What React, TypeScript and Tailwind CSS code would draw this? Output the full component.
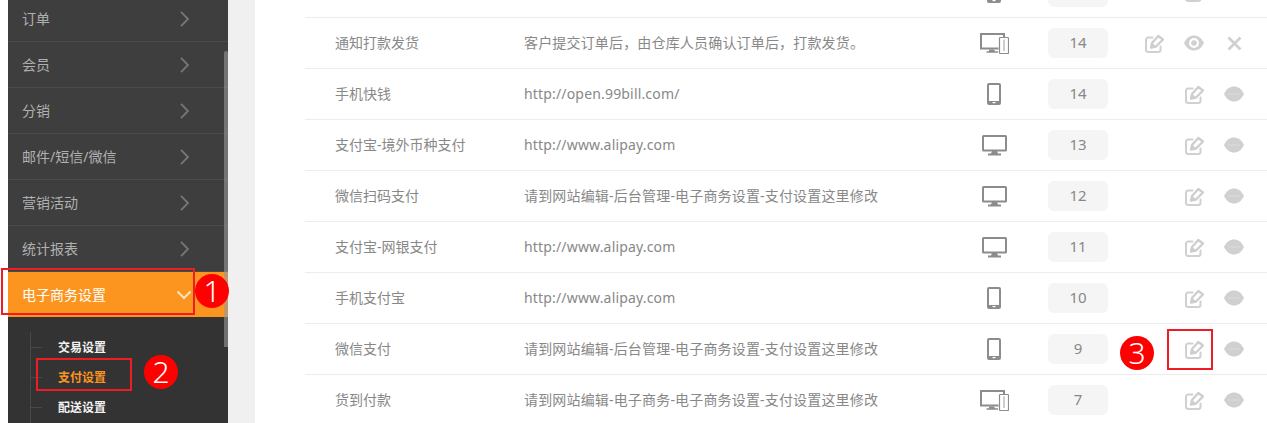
const zh = "font-['Noto_Sans','Noto_Sans_CJK_SC',sans-serif]";

function Chevron() {
  return (
    <svg width="9" height="16" viewBox="0 0 9 16" className="shrink-0">
      <path d="M1 .8L8 8l-7 7.200" fill="none" stroke="#777777" strokeWidth="1.800" />
    </svg>
  );
}

function Monitor() {
  return (
    <svg width="25" height="21" viewBox="0 0 25 21">
      <rect x="1" y="1" width="23" height="14.500" rx="0.500" fill="none" stroke="#8c8c8c" strokeWidth="2" />
      <path d="M10 16h5l1 2.500h3V20.500H6v-2h3z" fill="#8c8c8c" />
    </svg>
  );
}

function Phone() {
  return (
    <svg width="14" height="22" viewBox="0 0 14 22">
      <rect x="1" y="1" width="12" height="20" rx="1" fill="none" stroke="#8c8c8c" strokeWidth="2" />
      <rect x="1" y="18" width="12" height="3" fill="#8c8c8c" />
      <rect x="5.500" y="19" width="3" height="1.200" fill="#fff" />
    </svg>
  );
}

function Devices() {
  return (
    <svg width="29" height="21" viewBox="0 0 29 21">
      <path d="M18.500 15.500H1V1h23v9.500" fill="none" stroke="#8c8c8c" strokeWidth="2" />
      <path d="M9 16.500h5l1 1.800h3v1.500H6.500v-1.500H9z" fill="#8c8c8c" />
      <rect x="19.500" y="4.500" width="9" height="16" rx="0.800" fill="#fff" stroke="#8c8c8c" strokeWidth="1.200" />
      <rect x="23.300" y="6.500" width="1.400" height="11.500" fill="#b8b8b8" />
    </svg>
  );
}

function Edit() {
  return (
    <svg width="19" height="19" viewBox="0 0 19 19">
      <path d="M7.500 3.500H3.200A2.200 2.200 0 0 0 1 5.700v10.100A2.200 2.200 0 0 0 3.200 18h10.100a2.200 2.200 0 0 0 2.200-2.200v-3.300" fill="none" stroke="#d0d0d0" strokeWidth="2" strokeLinecap="round" />
      <path d="M6 13.500l1-4.500 6.300-7 4.700 3.500-7 7z" fill="none" stroke="#cecece" strokeWidth="2.300" strokeLinejoin="round" />
      <path d="M5.500 14l1-6 5 5z" fill="#cecece" />
    </svg>
  );
}

function Eye() {
  return (
    <svg width="20" height="16" viewBox="0 0 20 16">
      <path fillRule="evenodd" d="M0 8C2.500 2.800 6 .5 10 .5s7.500 2.300 10 7.500c-2.500 5.200-6 7.500-10 7.500S2.500 13.200 0 8zm10-5a5 5 0 1 0 0 10 5 5 0 0 0 0-10z" fill="#d0d0d0" />
      <circle cx="10" cy="8" r="2.800" fill="#d0d0d0" />
    </svg>
  );
}

function Closed() {
  return (
    <svg width="20" height="16" viewBox="0 0 20 16">
      <path d="M0 8C2.500 2.800 6 .5 10 .5s7.500 2.300 10 7.500c-2.500 5.200-6 7.500-10 7.500S2.500 13.200 0 8z" fill="#d0d0d0" />
      <path d="M4 8h12" stroke="#dcdcdc" strokeWidth="1" />
    </svg>
  );
}

function Cross() {
  return (
    <svg width="15" height="15" viewBox="0 0 15 15">
      <path d="M1.500 1.500l12 12M13.500 1.500l-12 12" stroke="#d0d0d0" strokeWidth="2.800" />
    </svg>
  );
}

const rows = [
  { name: "", desc: "", device: "phone", num: "" },
  { name: "通知打款发货", desc: "客户提交订单后\uFF0C由仓库人员确认订单后\uFF0C打款发货。", device: "devices", num: "14", active: true },
  { name: "手机快钱", desc: "http://open.99bill.com/", device: "phone", num: "14" },
  { name: "支付宝-境外币种支付", desc: "http://www.alipay.com", device: "monitor", num: "13" },
  { name: "微信扫码支付", desc: "请到网站编辑-后台管理-电子商务设置-支付设置这里修改", device: "monitor", num: "12" },
  { name: "支付宝-网银支付", desc: "http://www.alipay.com", device: "monitor", num: "11" },
  { name: "手机支付宝", desc: "http://www.alipay.com", device: "phone", num: "10" },
  { name: "微信支付", desc: "请到网站编辑-后台管理-电子商务设置-支付设置这里修改", device: "phone", num: "9" },
  { name: "货到付款", desc: "请到网站编辑-电子商务-电子商务设置-支付设置这里修改", device: "devices", num: "7" },
];

const menu = ["订单", "会员", "分销", "邮件/短信/微信", "营销活动", "统计报表"];

function Badge({ n, className }: { n: string; className: string }) {
  return (
    <div className={`absolute flex h-[34px] w-[34px] items-center justify-center rounded-full bg-[#fe0000] text-[30px] font-light leading-none text-white ${className}`}>
      {n}
    </div>
  );
}

export default function App() {
  return (
    <div className={`relative flex h-[423px] w-[1267px] overflow-hidden bg-white pl-2 ${zh}`}>
      <aside className="flex w-[220px] shrink-0 flex-col bg-[#333333]">
        <div className="-mt-[4px] flex flex-col">
          {menu.map((m) => (
            <div key={m} className="flex h-[46px] items-center justify-between border-b border-[#4a4a4a] bg-[#3e3e3e] pl-[14px] pr-[39px] text-sm text-[#b0b0b0]">
              <span>{m}</span>
              <Chevron />
            </div>
          ))}
          <div className="flex h-[45px] items-center justify-between bg-[#fb951f] pl-[14px] pr-[36px] text-sm text-white">
            <span>电子商务设置</span>
            <svg width="16" height="10" viewBox="0 0 16 10">
              <path d="M1.500 1.500L8 8l6.500-6.500" fill="none" stroke="#fde3c2" strokeWidth="2" />
            </svg>
          </div>
        </div>
        <div className="relative flex flex-col pl-[50px] pt-[16px] text-xs font-bold">
          <div className="absolute bottom-0 left-[22px] top-[15px] w-px bg-[#484848]" />
          {[
            { t: "交易设置", c: "text-[#f2f2f2]" },
            { t: "支付设置", c: "text-[#fb951f]" },
            { t: "配送设置", c: "text-[#f2f2f2]" },
          ].map((s) => (
            <div key={s.t} className={`relative flex h-[30px] items-center ${s.c}`}>
              <span className="absolute -left-[28px] top-[14px] h-px w-[12px] bg-[#484848]" />
              {s.t}
            </div>
          ))}
        </div>
      </aside>

      <div className="w-[27px] shrink-0 bg-[#f0f0f0]" />

      <main className="flex-1 pl-[50px]">
        <div className="-mt-[33px] flex flex-col">
          {rows.map((r, i) => (
            <div key={i} className="flex h-[51px] items-center border-b border-[#ececec] text-sm text-[#888888]">
              <span className="w-[219px] pl-[30px]">{r.name}</span>
              <span className="w-[430px] tracking-[0.17px]">{r.desc}</span>
              <div className="flex w-[80px] justify-center">
                {r.device === "phone" && <Phone />}
                {r.device === "monitor" && <Monitor />}
                {r.device === "devices" && <Devices />}
              </div>
              <div className="ml-[14px] flex h-[30px] w-[60px] items-center justify-center rounded-md bg-[#f5f5f5] text-[15px]">
                {r.num}
              </div>
              <div className="ml-[26px] flex w-[120px] items-center">
                <div className="flex w-[40px] justify-center">{r.active && <Edit />}</div>
                <div className="flex w-[40px] justify-center">{r.active ? <Eye /> : <Edit />}</div>
                <div className="flex w-[40px] justify-center">{r.active ? <Cross /> : <Closed />}</div>
              </div>
            </div>
          ))}
        </div>
      </main>

      <div className="absolute left-[224px] top-[51px] h-[296px] w-1 rounded-t-sm bg-[#999999]/60" />
      <div className="absolute left-[1px] top-[268px] h-[47px] w-[194px] border-2 border-[#ee1c25]" />
      <div className="absolute left-[36px] top-[358px] h-[33px] w-[96px] border-2 border-[#ee1c25]" />
      <div className="absolute left-[1167px] top-[329px] h-[41px] w-[46px] border-2 border-[#ee1c25]" />
      <Badge n="1" className="left-[195px] top-[274px]" />
      <Badge n="2" className="left-[144px] top-[355px]" />
      <Badge n="3" className="left-[1120px] top-[336px]" />
    </div>
  );
}
